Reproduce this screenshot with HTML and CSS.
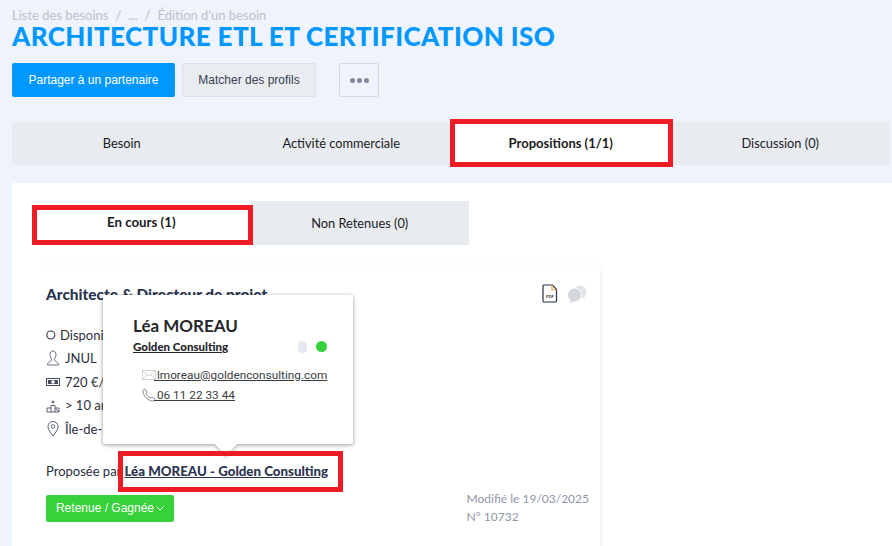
FILE: index.html
```html
<!DOCTYPE html>
<html lang="fr">
<head>
<meta charset="utf-8">
<title>Édition d'un besoin</title>
<link rel="stylesheet" href="styles.css">
</head>
<body>
<div class="page">
  <nav class="crumbs"><span>Liste des besoins</span><span class="sep">/</span><span>...</span><span class="sep">/</span><span>Édition d'un besoin</span></nav>
  <h1 class="title">ARCHITECTURE ETL ET CERTIFICATION ISO</h1>
  <div class="actions">
    <button class="btn btn-primary">Partager à un partenaire</button>
    <button class="btn btn-light">Matcher des profils</button>
    <button class="btn btn-more" aria-label="Plus"><i></i><i></i><i></i></button>
  </div>
  <div class="tabs">
    <div class="tab">Besoin</div>
    <div class="tab">Activité commerciale</div>
    <div class="tab active">Propositions (1/1)</div>
    <div class="tab">Discussion (0)</div>
  </div>
  <main class="panel">
    <div class="subtabs">
      <div class="subtab active">En cours (1)</div>
      <div class="subtab">Non Retenues (0)</div>
    </div>
    <article class="card">
      <div class="card-head">
        <h2 class="role">Architecte &amp; Directeur de projet</h2>
        <div class="card-icons">
          <svg width="16" height="19" viewBox="0 0 16 19" fill="none"><path d="M1.500 1h9l4 4.500V17a1 1 0 0 1-1 1h-12a.8.8 0 0 1-.5-1V1.500z" fill="#fff" stroke="#2a2f45" stroke-width="1.200"/><path d="M10 1v5h4.500" stroke="#e8a33a" stroke-width="1.200"/><text class="pdf-label" x="8" y="14" text-anchor="middle">PDF</text></svg>
          <svg width="20" height="18" viewBox="0 0 20 18"><circle cx="13" cy="7" r="6.500" fill="#dfe2e6"/><path d="M16 11l2.500 3-4-1.500z" fill="#dfe2e6"/><circle cx="7.500" cy="10" r="7" fill="#d3d6da" stroke="#fff"/><path d="M4 15l-2 3 5-1.500z" fill="#d3d6da"/></svg>
        </div>
      </div>
      <ul class="facts">
        <li><svg class="ico" width="10" height="10" viewBox="0 0 10 10" fill="none"><circle cx="4.800" cy="5" r="4" stroke="#2a3348" stroke-width="1.100"/></svg><span>Disponible</span></li>
        <li><svg class="ico" width="14" height="16" viewBox="0 0 14 16" fill="none" stroke="#5a6175" stroke-width=".9"><path d="M7 1c-2 0-3 1.500-3 3.500S5 8 5.500 9c.2 1-.5 2-1.500 2.500S1.500 13 1.500 15h11c0-2-1.500-2.800-2.500-3.500S8.300 10 8.500 9C9 8 10 6.500 10 4.500S9 1 7 1z"/></svg><span>JNUL</span></li>
        <li><svg class="ico" width="14" height="10" viewBox="0 0 14 10"><rect x=".5" y="1.500" width="13" height="7" fill="none" stroke="#454c60"/><rect x="2" y="3" width="10" height="4" fill="#454c60"/><circle cx="7" cy="5" r="1.800" fill="#fff"/></svg><span>720 €/J</span></li>
        <li><svg class="ico" width="14" height="16" viewBox="0 0 14 16" fill="none" stroke="#5a6175"><path d="M5 15V8.500h4V15M1 15v-4h4M9 11h4v4zM1 15h12"/><circle cx="7" cy="5" r="1" fill="#444"/></svg><span>&gt; 10 ans</span></li>
        <li><svg class="ico" width="14" height="17" viewBox="0 0 14 17" fill="none" stroke="#5a6175"><path d="M7 16C4 12 2 9.500 2 6.500a5 5 0 0 1 10 0C12 9.500 10 12 7 16z"/><circle cx="7" cy="6.500" r="1.800"/></svg><span>Île-de-France</span></li>
      </ul>
      <p class="proposed">Proposée par <a class="proposer" href="#">Léa MOREAU - Golden Consulting</a></p>
      <div class="card-foot">
        <button class="btn-status">Retenue / Gagnée<svg width="8" height="5" viewBox="0 0 8 5" fill="none" stroke="#fff"><path d="M.5.5 4 4 7.500.5"/></svg></button>
        <div class="meta"><div>Modifié le 19/03/2025</div><div>N° 10732</div></div>
      </div>
    </article>
  </main>
</div>

<aside class="popover">
  <div class="pop-name">Léa MOREAU</div>
  <div class="pop-row">
    <a class="pop-company" href="#">Golden Consulting</a>
    <div class="dots"><span class="dot-off"></span><span class="dot-on"></span></div>
  </div>
  <div class="pop-contact">
    <div class="pop-line"><svg width="14" height="10" viewBox="0 0 14 10" fill="none" stroke="#cfd2d6"><rect x=".5" y=".5" width="13" height="9"/><path d="M.5.5 7 6l6.500-5.500M.5 9.500 5 4.500M13.500 9.500 9 4.500"/></svg><a href="#"> lmoreau@goldenconsulting.com</a></div>
    <div class="pop-line"><svg width="14" height="14" viewBox="0 0 14 14" fill="none" stroke="#8a8d92"><path d="M1 3c0-1 1-2 2-2l2 3-1 1.500c.5 2 2.500 4 4.500 4.500L10 9l3 2c0 1-1 2-2 2C6 13 1 8 1 3z"/></svg><a href="#"> 06 11 22 33 44</a></div>
  </div>
  <span class="pop-arrow"></span>
</aside>

<div class="mark mark-tab"></div>
<div class="mark mark-sub"></div>
<div class="mark mark-name"></div>
</body>
</html>
```

FILE: styles.css
```css
* { box-sizing: border-box; }
html, body { margin: 0; height: 100%; overflow: hidden; }
body { background: #eff3fb; font-family: Lato, "Noto Sans", sans-serif; color: #222; position: relative; }
.page { padding: 8px 0 0 12px; }
.crumbs { display: flex; gap: 6px; font-size: 13px; line-height: 15px; color: #bfc1c4; }
.sep { margin: 0 1px; }
.title { margin: 0; font-size: 26px; line-height: 27px; font-weight: 900; color: #0098ff; letter-spacing: .4px; white-space: nowrap; }
.actions { display: flex; align-items: stretch; margin-top: 13px; height: 34px; }
.btn { font-family: "Liberation Sans", sans-serif; font-size: 12px; border-radius: 2px; border: 1px solid transparent; padding: 0; }
.btn-primary { width: 163px; background: #0098ff; color: #fff; }
.btn-light { width: 134px; margin-left: 7px; background: #e9edf2; border-color: #dde1e6; color: #3a4050; }
.btn-more { width: 40px; margin-left: 23px; background: #eff3fb; border-color: #d5d9e0; display: flex; align-items: center; justify-content: center; gap: 2px; }
.btn-more i { width: 5px; height: 5px; border-radius: 50%; background: #7f879a; }
.tabs { display: flex; width: 878px; height: 43px; margin-top: 25px; background: #e8ebf0; }
.tab { flex: 1; display: flex; align-items: center; justify-content: center; padding-bottom: 1px; font-size: 12.800px; color: #1b1b22; }
.tab.active { background: #fff; font-weight: 700; font-size: 13px; }
.panel { margin-top: 18px; background: #fff; height: 380px; padding: 18px 0 0 20px; }
.subtabs { display: flex; width: 437px; height: 44px; background: #e8ebf0; }
.subtab { flex: 1; display: flex; align-items: center; justify-content: center; padding-bottom: 1px; font-size: 12.800px; color: #1b1b22; }
.subtab.active { background: #fff; font-weight: 700; font-size: 13.300px; border-bottom: 1px solid #0098ff; }
.card { width: 568px; height: 300px; margin-top: 20px; padding: 19px 13px 0 14px; background: #fff; box-shadow: 3px 0 6px -3px rgba(120,130,160,.14); }
.card-head { display: flex; justify-content: space-between; align-items: flex-start; }
.role { margin: 0; font-size: 15.400px; line-height: 20px; font-weight: 900; color: #2b3550; }
.card-icons { display: flex; align-items: center; gap: 9px; margin-top: 0; }
.pdf-label { font-family: "Liberation Sans", sans-serif; font-size: 4px; font-weight: 700; fill: #3c3a30; }
.facts { list-style: none; margin: 19px 0 0; padding: 0; font-size: 13px; color: #2b3040; }
.facts li { display: flex; align-items: center; height: 23.500px; }
.ico { width: 14px; margin-right: 5px; flex: none; }
.facts li:first-child .ico { width: 10px; margin-right: 4px; }
.proposed { margin: 20px 0 0; font-size: 13px; line-height: 20px; color: #2b3040; }
.proposer { font-weight: 900; font-size: 13.300px; color: #2b3550; }
.card-foot { display: flex; justify-content: space-between; align-items: flex-start; margin-top: 10px; }
.btn-status { width: 128px; height: 27px; margin-top: 4px; display: flex; align-items: center; justify-content: center; gap: 2px; background: #37d13b; border: 0; border-radius: 2px; color: #fff; font-family: "Liberation Sans", sans-serif; font-size: 12px; padding: 0; }
.meta { font-size: 12px; line-height: 18px; color: #8f96a6; margin-right: -2px; margin-top: -1px; }
.popover { position: absolute; left: 103px; top: 295px; width: 250px; height: 149px; padding: 21px 26px 0 30px; background: #fff; border-radius: 2px; box-shadow: 0 1px 4px rgba(0,0,0,.4); }
.pop-name { font-size: 17px; line-height: 20px; font-weight: 700; color: #26262a; }
.pop-row { display: flex; justify-content: space-between; align-items: center; margin-top: 2px; height: 17px; }
.pop-company { font-size: 11.500px; font-weight: 900; color: #26262a; }
.dots { display: flex; align-items: center; gap: 9px; }
.dot-off { width: 9px; height: 12px; border-radius: 5px; background: #e5e8ef; }
.dot-on { width: 11px; height: 11px; border-radius: 50%; background: #37d13b; }
.pop-contact { margin: 10px 0 0 9px; font-family: Roboto, sans-serif; font-size: 11.800px; white-space: nowrap; }
.pop-line { display: flex; align-items: center; height: 20px; }
.pop-line svg { flex: none; margin-right: -2px; }
.pop-line a { color: #3c3c40; white-space: pre; }
.pop-arrow { position: absolute; left: 115px; bottom: -8px; width: 16px; height: 16px; background: #fff; transform: rotate(45deg); box-shadow: 2px 2px 3px rgba(0,0,0,.18); }
.mark { position: absolute; border: 5px solid #ee1c25; }
.mark-tab { left: 450px; top: 119px; width: 223px; height: 48px; }
.mark-sub { left: 32px; top: 205px; width: 221px; height: 40px; }
.mark-name { left: 118px; top: 451px; width: 225px; height: 41px; }
```
